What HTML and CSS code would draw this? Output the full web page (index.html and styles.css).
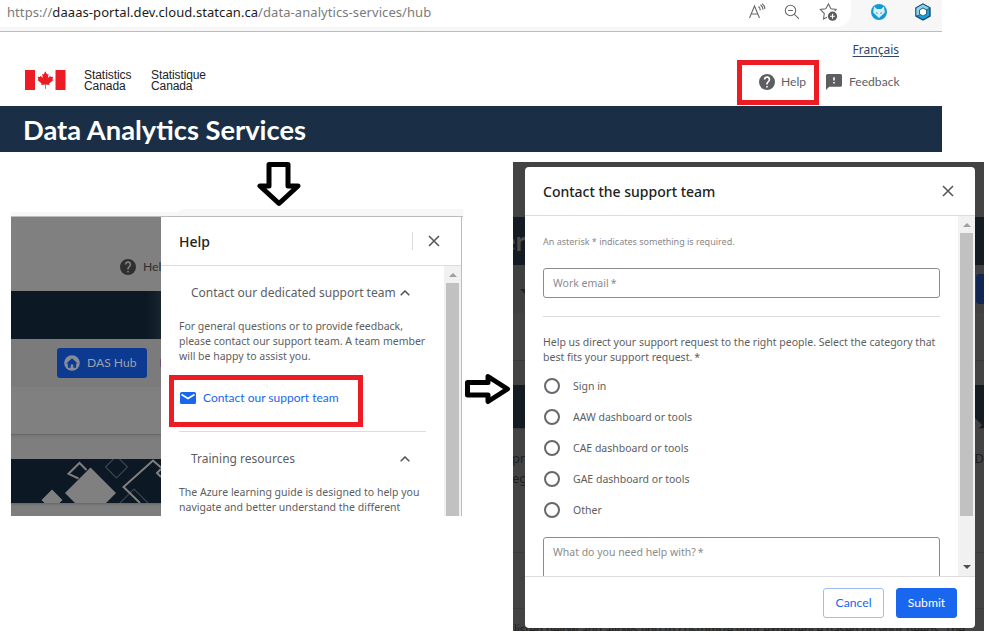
FILE: index.html
```html
<!DOCTYPE html>
<html lang="en">
<head>
<meta charset="utf-8">
<title>Data Analytics Services</title>
<link rel="stylesheet" href="styles.css">
</head>
<body>
<section class="portal">
  <div class="browser">
    <div class="address">
      <span class="url">https://<b>daaas-portal.dev.cloud.statcan.ca</b>/data-analytics-services/hub</span>
      <svg class="bar-icons" width="100" height="27" viewBox="0 0 100 27" fill="none" stroke="#6b6b6b" stroke-width="1.1">
        <path d="M5.500 18 10.500 6l5 12M7.300 14h6.4M14.500 6.500q2 1.500 1.600 4M16.500 4.800q2.600 2 2.400 5M18 3.800q3 2 2.800 5.200"/>
        <circle cx="46.500" cy="10.500" r="5.200"/><path d="M50.200 14.200 55 18.800M44 10.500h5"/>
        <path d="M83 17.200 79.500 19l.8-5.500-4-4 5.400-.8L84.500 4l2.400 4.700 5.300.8-1.500 1.500"/>
        <circle cx="88.500" cy="16.200" r="4.600" fill="#5a5a5a" stroke="none"/><path d="M86 16.200h5M88.500 13.700v5" stroke="#fff"/>
      </svg>
    </div>
    <svg class="extensions" width="64" height="24" viewBox="0 0 64 24">
      <circle cx="9" cy="12" r="8" fill="#1598d8"/>
      <path d="M4 6.500 7 9h4l3-2.500.8 6L9 18l-5.800-5.500z" fill="#d9f1fb"/><path d="m5.500 12 2.500 1-1 1zM12.500 12 10 13l1 1z" fill="#1598d8"/>
      <path d="m53 4 7 4v8l-7 4-7-4V8z" fill="#1b9ed8" stroke="#174a68" stroke-width="1.400"/>
      <path d="m46 8 7-4 7 4-4 2-3-2-3 2v5l-4 1z" fill="#8fd4ee" stroke="#174a68" stroke-width=".7"/>
      <path d="m53 8 3.500 2v4L53 16l-3.500-2v-4z" fill="#fff" stroke="#174a68" stroke-width=".8"/>
    </svg>
  </div>
  <header class="masthead">
    <div class="brand">
      <svg width="41" height="20" viewBox="0 0 41 20"><path fill="#ed1c24" d="M0 0h10v20H0zM30.500 0h10v20h-10zM20.300 1.300l1.700 3.100 1.500-.7-.6 4.400 2.400-2.300.5 1.300 2.500-.4-.9 2.600 1 .7-4.200 3.500.4 1.500-3.900-.6.100 4.300h-.8l.1-4.300-3.900.6.400-1.500-4.200-3.500 1-.7-.9-2.600 2.500.4.500-1.300 2.300 2.300-.6-4.400 1.500.7z"/></svg>
      <p class="brand-en">Statistics<br>Canada</p>
      <p class="brand-fr">Statistique<br>Canada</p>
    </div>
    <div class="tools">
      <a class="lang">Français</a>
      <nav>
        <span class="highlight nav-help">
          <svg width="16" height="16" viewBox="2 2 20 20"><path fill="#5c5e62" d="M12 2a10 10 0 1 0 0 20 10 10 0 0 0 0-20zm1 17h-2v-2h2zm2.070-7.750-.9.920C13.450 12.900 13 13.500 13 15h-2v-.5c0-1.100.45-2.100 1.170-2.830l1.240-1.260A2 2 0 1 0 10 9H8a4 4 0 1 1 7.070 2.250z"/></svg>
          <span>Help</span>
        </span>
        <svg class="fb-icon" width="16" height="16" viewBox="2 2 20 20"><path fill="#5c5e62" d="M20 2H4a2 2 0 0 0-2 2v18l4-4h14a2 2 0 0 0 2-2V4a2 2 0 0 0-2-2zm-7 12h-2v-2h2zm0-4h-2V6h2z"/></svg>
        <span class="fb">Feedback</span>
      </nav>
    </div>
  </header>
  <h1>Data Analytics Services</h1>
</section>

<div class="steps">
  <div class="step-help">
    <svg class="arrow-down" width="44" height="46" viewBox="0 0 44 46"><path d="M12 3.500h19v21.500h10L22 42.500 3 25h9z" fill="#fff" stroke="#000" stroke-width="5" stroke-linejoin="round"/></svg>
    <section class="help-shot">
      <div class="tab-edge"><i></i></div>
      <div class="help-page">
        <div class="dimmed">
          <div class="d-head">
            <svg width="16" height="16" viewBox="2 2 20 20"><path fill="#2e2f31" d="M12 2a10 10 0 1 0 0 20 10 10 0 0 0 0-20zm1 17h-2v-2h2zm2.070-7.750-.9.920C13.450 12.900 13 13.500 13 15h-2v-.5c0-1.100.45-2.100 1.170-2.830l1.240-1.260A2 2 0 1 0 10 9H8a4 4 0 1 1 7.070 2.250z"/></svg>
            <span>Help</span>
          </div>
          <div class="d-band"></div>
          <div class="d-nav">
            <span class="hub"><svg width="16" height="16" viewBox="0 0 16 16"><circle cx="8" cy="8" r="7.800" fill="#868c98"/><path d="M2.300 8.600 8 3.200l5.700 5.400h-1.600v4.200H9.300V9.600H6.700v3.200H3.900V8.600z" fill="#0d3a91"/></svg><span>DAS Hub</span></span>
            <i class="sliver"></i>
          </div>
          <div class="d-card"></div>
          <div class="d-gap"></div>
          <svg class="d-art" width="150" height="44" viewBox="0 0 150 44">
            <rect width="150" height="44" fill="#0c1823"/>
            <path d="M30.500 41 41 30.500 51.500 41l-3 3h-15zM54 34 79.500 8.500 105 34 95 44H64z" fill="#808080"/>
            <path d="M67.500 19.500 57.500 14.800 68.500 4l7 7" fill="none" stroke="#808080" stroke-width="2"/>
            <path d="m94.500 8 11-11 11 11-11 11zM109 44l14-14 14 14" fill="none" stroke="#3a444d" stroke-width="1.200"/>
            <path d="M129 44 112.500 28 142 1.500l8 7M150 18l-4-4 4-4" fill="none" stroke="#808080" stroke-width="2"/>
          </svg>
          <div class="d-foot"></div>
        </div>
        <div class="drawer">
          <div class="drawer-head"><h2>Help</h2><svg width="12" height="12" viewBox="0 0 12 12"><path d="m1 1 10 10M11 1 1 11" stroke="#55585c" stroke-width="1.600"/></svg></div>
          <div class="drawer-body">
            <div class="drawer-content">
              <h3><span>Contact our dedicated support team</span><svg width="10" height="6" viewBox="0 0 10 6"><path d="m.7 5.300 4.300-4.300 4.300 4.300" fill="none" stroke="#55585c" stroke-width="1.600"/></svg></h3>
              <p>For general questions or to provide feedback,<br>please contact our support team. A team member<br>will be happy to assist you.</p>
              <div class="highlight contact"><svg width="16" height="12" viewBox="0 0 16 12"><rect width="16" height="12" rx="1.500" fill="#1967ef"/><path d="m1.500 2.500 6.500 4 6.500-4" fill="none" stroke="#fff" stroke-width="1.500"/></svg><span>Contact our support team</span></div>
              <hr>
              <h3 class="training"><span>Training resources</span><svg width="10" height="6" viewBox="0 0 10 6"><path d="m.7 5.300 4.300-4.300 4.300 4.300" fill="none" stroke="#55585c" stroke-width="1.600"/></svg></h3>
              <p>The Azure learning guide is designed to help you<br>navigate and better understand the different</p>
            </div>
            <div class="scroll"><i class="up"></i><i class="thumb"></i></div>
          </div>
        </div>
      </div>
    </section>
  </div>
  <svg class="arrow-right" width="47" height="32" viewBox="0 0 47 32"><path d="M3.500 9.500H24V3.500L43.500 16 24 28.500V22H3.500z" fill="#fff" stroke="#000" stroke-width="5" stroke-linejoin="round"/></svg>
  <section class="contact-shot">
    <div class="backdrop">
      <div class="b-head"></div>
      <div class="b-band">er</div>
      <div class="b-nav"><i class="caret"></i><i class="b-btn"></i></div>
      <div class="b-card"></div>
      <div class="b-gap"></div>
      <div class="b-art"><svg width="9" height="44" viewBox="0 0 9 44"><path d="m0 33 7 7-4 4H0z" fill="#424242"/></svg></div>
      <div class="b-text"><span>pro<br>eg</span><span>n D</span></div>
      <div class="b-row"></div>
      <div class="b-last">listed below and allows you to customize your experience based on your needs. The</div>
    </div>
    <div class="modal">
      <div class="modal-head"><h2>Contact the support team</h2><svg width="12" height="12" viewBox="0 0 12 12"><path d="m1 1 10 10M11 1 1 11" stroke="#55585c" stroke-width="1.600"/></svg></div>
      <div class="modal-body">
        <form class="form">
          <p class="note">An asterisk * indicates something is required.</p>
          <div class="field">Work email<em>*</em></div>
          <hr>
          <p>Help us direct your support request to the right people. Select the category that<br>best fits your support request.<em>*</em></p>
          <div class="options">
            <label><i></i>Sign in</label>
            <label><i></i>AAW dashboard or tools</label>
            <label><i></i>CAE dashboard or tools</label>
            <label><i></i>GAE dashboard or tools</label>
            <label><i></i>Other</label>
          </div>
          <div class="field area">What do you need help with?<em>*</em></div>
        </form>
        <div class="scroll full"><i class="up"></i><i class="thumb"></i><i class="down"></i></div>
      </div>
      <div class="modal-foot"><span class="btn cancel">Cancel</span><span class="btn submit">Submit</span></div>
    </div>
  </section>
</div>
</body>
</html>
```
FILE: styles.css
```css
* { box-sizing: border-box; margin: 0; padding: 0; }
body { width: 989px; height: 635px; overflow: hidden; background: #fff; font-family: "Noto Sans", sans-serif; color: #5c5e62; white-space: nowrap; }
svg { display: block; flex: none; }
i { display: block; flex: none; }
em { margin-left: 2px; font-style: normal; }
h1, h2, h3, b { font-weight: 400; }
hr { border: 0; border-top: 1px solid #dcdcdc; }
p { font-size: 10.500px; line-height: 15px; }
.highlight { border: 5px solid #ed1c24; }

.portal { width: 942px; height: 152px; }
.browser { display: flex; height: 32px; background: #f7f7f7; border-bottom: 1px solid #bcbcbc; }
.address { display: flex; justify-content: space-between; width: 851px; height: 27px; padding: 0 7px; background: #fff; border-bottom-right-radius: 14px; }
.url { font: 13px/25px "Noto Sans", sans-serif; color: #7b7b7b; letter-spacing: .07px; }
.url b { color: #1b1b1b; }
.extensions { margin-left: 19px; }
.masthead { display: flex; justify-content: space-between; height: 74px; }
.brand { display: flex; padding: 38px 0 0 25px; color: #222; }
.brand p { font: 12px/11px "Liberation Sans", sans-serif; }
.brand .brand-en { width: 48px; margin-left: 18px; letter-spacing: -.05px; }
.brand .brand-fr { margin-left: 19px; letter-spacing: -.1px; }
.tools { display: flex; flex-direction: column; align-items: flex-end; width: 205px; }
.lang { margin: 9px 43px 0 0; font: 12px/18px "Noto Sans", sans-serif; color: #32466d; text-decoration: underline; text-underline-offset: 2px; }
.tools nav { display: flex; width: 205px; margin-top: 1px; font: 12.100px/16px Lato, sans-serif; }
.nav-help { display: flex; align-items: center; width: 82px; height: 45px; padding: 0 0 2px 17px; }
.nav-help span { margin-left: 6px; }
.fb-icon { margin: 14px 0 0 7px; }
.fb { margin: 14px 0 0 7px; }
.portal h1 { height: 46px; padding-left: 23px; background: #1a2f46; color: #fff; font: 700 27.300px/48px Lato, sans-serif; }

.steps { display: flex; height: 483px; }
.step-help { width: 463px; }
.arrow-down { margin: 9px 0 2px 257px; }
.help-shot { width: 452px; height: 307px; margin-left: 11px; }
.tab-edge { height: 8px; background: #f7f7f7; border-bottom: 1px solid #bcbcbc; }
.tab-edge i { width: 172px; height: 3px; background: #fff; border-bottom-right-radius: 10px 3px; }
.help-page { display: flex; width: 451px; height: 299px; border-right: 1px solid #bcbcbc; }
.dimmed { width: 150px; overflow: hidden; background: #808080; }
.d-head { display: flex; height: 74px; padding: 42px 0 0 109px; font: 12.200px/16px Lato, sans-serif; color: #2e2f31; }
.d-head span { margin-left: 7px; }
.d-band { height: 48px; background: linear-gradient(90deg, #0c1823 90%, #17252e); }
.d-nav { display: flex; align-items: center; height: 48px; padding: 0 0 0 46px; background: #7b7b7b; }
.hub { display: flex; align-items: center; width: 90px; height: 30px; padding-left: 7px; border-radius: 3px; background: #0d3a91; color: #9ba1ac; font: 12.100px/16px Lato, sans-serif; }
.hub span { margin-left: 7px; }
.sliver { width: 1px; height: 8px; margin-left: 13px; background: #67507a; }
.d-card { height: 48px; border-bottom: 1px solid #696969; }
.d-gap { height: 24px; background: linear-gradient(#757575, #7e7e7e 4px); }
.d-foot { height: 13px; background: linear-gradient(#686868, #7e7e7e 3px); }
.drawer { width: 300px; background: #fff; }
.drawer-head { display: flex; align-items: center; justify-content: space-between; height: 49px; padding: 0 21px 0 18px; border-bottom: 1px solid #dcdcdc; }
h2 { padding-top: 2px; font: 500 14px/20px "Noto Sans", sans-serif; color: #222; }
.drawer-head svg { box-sizing: content-box; padding: 3px 0 3px 15px; border-left: 1px solid #dcdcdc; }
.drawer-body { display: flex; justify-content: space-between; height: 250px; overflow: hidden; }
.drawer-content { padding: 18px 0 0 18px; width: 266px; }
h3 { display: flex; align-items: center; justify-content: space-between; width: 231px; height: 18px; padding-left: 12px; font: 12px/18px "Noto Sans", sans-serif; }
.drawer-content p { margin-top: 17px; }
.contact { display: flex; align-items: center; width: 194px; height: 52px; margin: 11px 0 4px -10px; padding: 0 0 7px 6px; color: #1967ef; font: 12px/16px Lato, sans-serif; }
.contact span { margin-left: 7px; }
.drawer-content hr { width: 247px; }
.training { margin-top: 18px; }
.scroll { width: 17px; padding: 7px 2px 0; background: #f1f1f1; }
.up, .down { margin: 0 auto; border: 4px solid transparent; border-top: 0; border-bottom: 4px solid #a0a0a0; width: 8px; }
.down { border-top: 4px solid #505050; border-bottom: 0; margin-top: 49px; }
.thumb { height: 240px; margin-top: 6px; background: #c1c1c1; }
.arrow-right { margin: 221px 0 0 1px; }

.contact-shot { position: relative; width: 471px; height: 469px; margin: 10px 0 0 2px; overflow: hidden; }
.backdrop { height: 469px; background: #434343; color: #202020; font-size: 13px; }
.b-head { height: 55px; }
.b-band { height: 48px; background: #141b23; color: #4b4b4b; font: 700 27.200px/48px Lato, sans-serif; text-indent: -12px; }
.b-nav { display: flex; justify-content: space-between; height: 48px; padding-top: 9px; background: #404040; }
.caret { margin: 15px 0 0 7px; border: 5px solid transparent; border-top-color: #222; height: 0; }
.b-btn { width: 8px; height: 30px; border-radius: 3px 0 0 3px; background: #122654; }
.b-card { height: 48px; border-bottom: 1px solid #393939; }
.b-gap { height: 24px; }
.b-art { display: flex; justify-content: flex-end; height: 44px; background: #141b23; border-bottom: 1px solid #393939; }
.b-text { display: flex; justify-content: space-between; height: 124px; padding-top: 19px; line-height: 20px; border-bottom: 1px solid #3b3b3b; }
.b-text span:first-child { margin-left: -1px; }
.b-row { height: 56px; border-bottom: 1px solid #3b3b3b; }
.b-last { margin: 11px 0 0 1px; font-size: 12px; line-height: 20px; letter-spacing: -.25px; }
.modal { position: absolute; left: 12px; top: 5px; width: 450px; height: 461px; background: #fff; border-radius: 4px; overflow: hidden; }
.modal-head { display: flex; align-items: center; justify-content: space-between; height: 49px; padding: 0 21px 0 18px; border-bottom: 1px solid #dcdcdc; }
.modal-body { display: flex; justify-content: space-between; height: 360px; overflow: hidden; }
.form { width: 415px; padding: 19px 0 0 18px; }
.note { font-size: 9px; color: #86888b; line-height: 14px; }
.field { height: 30px; margin-top: 19px; padding-left: 9px; border: 1px solid #8c8c8c; border-radius: 3px; font-size: 10.500px; line-height: 28px; color: #8b8b8b; }
.form hr { margin: 18px 0; }
.options { display: grid; grid-auto-rows: 30.800px; margin-top: 6px; }
.options label { display: flex; align-items: center; font-size: 10.500px; }
.options i { width: 16px; height: 16px; margin: 0 13px 0 1px; border: 2px solid #66686b; border-radius: 50%; }
.area { height: 60px; margin-top: 12px; }
.full .thumb { height: 283px; }
.modal-foot { display: flex; justify-content: flex-end; gap: 12px; height: 52px; padding: 11px 18px 0; border-top: 1px solid #dcdcdc; }
.btn { width: 61px; height: 30px; border: 1px solid #9fbdf8; border-radius: 3px; color: #1967ef; font: 12.200px/28px Lato, sans-serif; text-align: center; }
.submit { background: #1967ef; border-color: #1967ef; color: #fff; }
```
